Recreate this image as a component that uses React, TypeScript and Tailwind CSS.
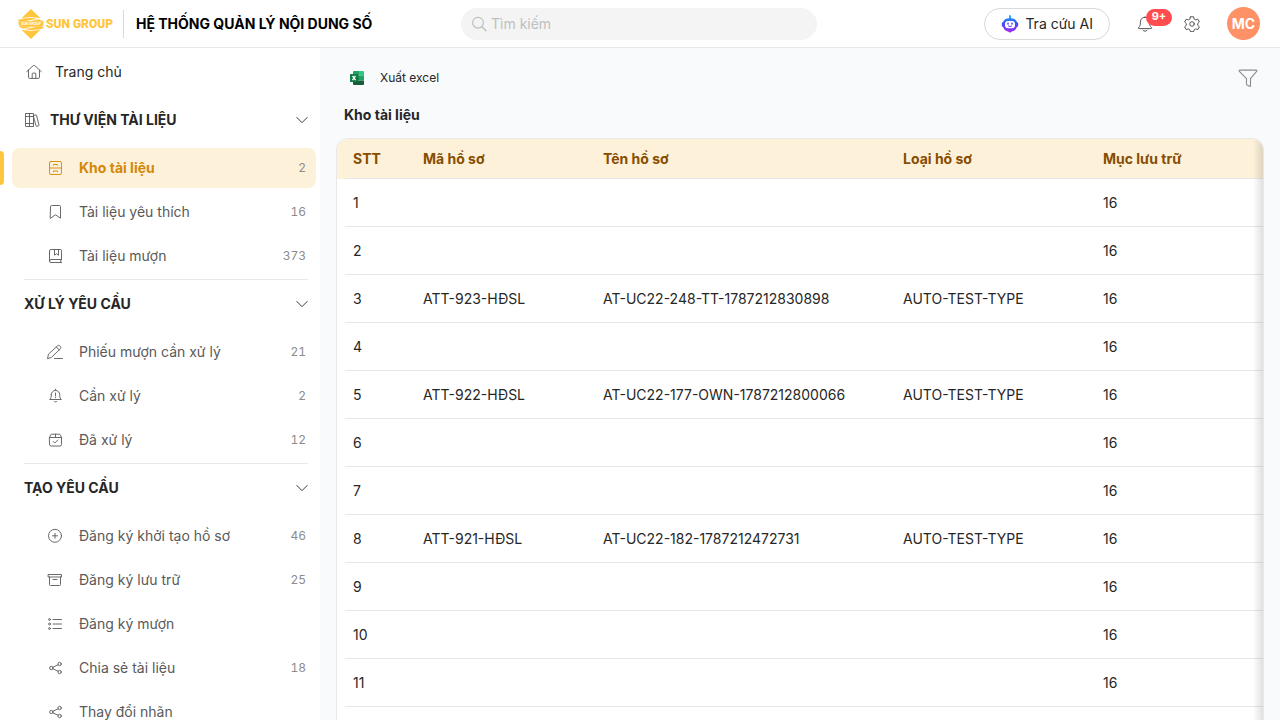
import React from 'react'
import { clsx } from 'clsx'

type IconProps = { className?: string; children?: React.ReactNode }

const Icon = ({ className, children }: IconProps) => (
  <svg
    viewBox="0 0 16 16"
    fill="none"
    stroke="currentColor"
    strokeWidth="0.9"
    strokeLinecap="round"
    strokeLinejoin="round"
    aria-hidden="true"
    className={clsx('shrink-0', className ?? 'size-4')}
  >
    {children}
  </svg>
)

const HomeIcon = () => (
  <Icon>
    <path d="M.7 7.6 7.2 1.7a1.2 1.2 0 0 1 1.6 0l6.5 5.9" />
    <path d="M2.5 6.2v7a1.2 1.2 0 0 0 1.2 1.2h8.6a1.2 1.2 0 0 0 1.2-1.2v-7" />
    <path d="M6.2 14.2V9.9a.8.8 0 0 1 .8-.8h2a.8.8 0 0 1 .8.8v4.3" />
  </Icon>
)

const BooksIcon = () => (
  <Icon>
    <path d="M2 1.5h7.5v13H2a.5.5 0 0 1-.5-.5V2a.5.5 0 0 1 .5-.5ZM5.500 1.500v13M1.500 4.500h8M1.500 11.500h8" />
    <path d="m9.700 3.500 2.200-.6a.5.5 0 0 1 .6.4l2.500 9.900a.5.5 0 0 1-.4.6l-2 .5a.5.5 0 0 1-.6-.4L9.700 5.200" />
  </Icon>
)

const CabinetIcon = () => (
  <Icon>
    <rect x="2.5" y="1.5" width="12" height="13" rx="1.5" />
    <path d="M2.500 8h12M6.500 5.200v-.7h4v.7M6.500 11.700V11h4v.7" />
  </Icon>
)

const BookmarkIcon = () => (
  <Icon>
    <path d="M3.500 2.500a1 1 0 0 1 1-1h8a1 1 0 0 1 1 1v11.700l-5-3.400-5 3.400z" />
  </Icon>
)

const BookIcon = () => (
  <Icon>
    <path d="M14.500 11.500V2.500a1 1 0 0 0-1-1h-9.500a1.500 1.500 0 0 0-1.500 1.500v10a1.500 1.500 0 0 0 1.500 1.500h10.500" />
    <path d="M2.500 13A1.500 1.500 0 0 1 4 11.500h10.500M13.800 11.500v3" />
    <path d="M7.500 1.500v5.700l2-1.500 2 1.500V1.500" />
  </Icon>
)

const PencilIcon = () => (
  <Icon>
    <path d="m.6 14.300.9-4.200 9.100-8.300a1.600 1.600 0 0 1 2.200 0l.6.700a1.600 1.600 0 0 1 0 2.200l-8.600 8.400z" />
    <path d="m9.400 3 2.900 3M7.500 14.500h8" />
  </Icon>
)

const AlertBellIcon = () => (
  <Icon>
    <path d="M8.500 1.200v1M4.300 6.600a4.200 4.200 0 0 1 8.400 0c0 3 .6 4 1.600 4.900H2.700c1-.9 1.600-1.900 1.600-4.900ZM7.200 13.300c.6.900 2 .9 2.600 0M8.500 5v3" />
    <path d="M8.500 9.600h.01" strokeWidth="1.2" />
  </Icon>
)

const BoxCheckIcon = () => (
  <Icon>
    <path d="M2.500 5.500 3.700 2.800a1 1 0 0 1 .9-.6h7.800a1 1 0 0 1 .9.600l1.200 2.700v7a1.500 1.500 0 0 1-1.500 1.500H4a1.500 1.500 0 0 1-1.500-1.500zM2.500 5.500h12M8.500 2.200v3.300" />
    <path d="m6.300 9.500 1.500 1.500 2.900-2.900" />
  </Icon>
)

const PlusCircleIcon = () => (
  <Icon>
    <circle cx="8" cy="7.8" r="6.5" />
    <path d="M8 5.300v5M5.500 7.800h5" />
  </Icon>
)

const ArchiveIcon = () => (
  <Icon>
    <path d="M1.500 2.500h13v2.500h-13zM2.500 5v7.500a1 1 0 0 0 1 1h9a1 1 0 0 0 1-1V5M6 7.500h4" />
  </Icon>
)

const ListIcon = () => (
  <Icon>
    <path d="M6 3.500h8.500M6 8h8.500M6 12.500h8.500" />
    <circle cx="2.5" cy="3.5" r=".9" />
    <circle cx="2.5" cy="8" r=".9" />
    <circle cx="2.5" cy="12.5" r=".9" />
  </Icon>
)

const ShareIcon = () => (
  <Icon>
    <circle cx="4.3" cy="8" r="1.7" />
    <circle cx="12.6" cy="4" r="1.7" />
    <circle cx="12.6" cy="12" r="1.7" />
    <path d="m5.900 7.300 5.200-2.600M5.900 8.800l5.200 2.500" />
  </Icon>
)

const ChevronIcon = () => (
  <Icon className="size-3">
    <path d="m1 4.500 7 7 7-7" strokeWidth="1.2" />
  </Icon>
)

const SearchIcon = () => (
  <Icon>
    <circle cx="7" cy="6.7" r="5.4" strokeWidth="1.2" />
    <path d="m11 10.800 4 4" strokeWidth="1.4" />
  </Icon>
)

const BellIcon = () => (
  <Icon>
    <path d="M8 1.200c-3 0-4.600 2.200-4.600 5 0 3-.5 4-1.900 5.500-.3.400-.1.900.4.900h12.200c.5 0 .7-.5.400-.9-1.400-1.500-1.900-2.500-1.900-5.500 0-2.800-1.600-5-4.600-5ZM6 14.300c1.100 1.200 2.900 1.200 4 0" />
  </Icon>
)

const GearIcon = () => (
  <Icon>
    <circle cx="8" cy="8" r="2.3" />
    <path d="M6.400.8h3.200l.5 2.200 1.500.9 2.200-.7 1.600 2.800-1.700 1.500v1.800l1.700 1.500-1.600 2.800-2.200-.7-1.500.9-.5 1.900H6.400l-.5-1.900-1.500-.9-2.200.7-1.600-2.800 1.700-1.500V7.500L.6 6l1.600-2.800 2.200.7L5.900 3z" />
  </Icon>
)

const FilterIcon = () => (
  <Icon className="size-5">
    <path d="M1.500 1.700h13c.5 0 .8.6.4 1L10 8.500V14c0 .5-.4.800-.8.600l-2-1a.8.8 0 0 1-.4-.7V8.500L1.100 2.700c-.4-.4-.1-1 .4-1Z" />
  </Icon>
)

const RobotIcon = () => (
  <svg viewBox="0 0 18 18" className="size-[18px] shrink-0" aria-hidden="true">
    <defs>
      <linearGradient id="robot" x1="0" y1="0" x2="0" y2="1">
        <stop offset="0" stopColor="#12b5ff" />
        <stop offset=".45" stopColor="#3b50f5" />
        <stop offset="1" stopColor="#a928f0" />
      </linearGradient>
    </defs>
    <path
      fill="url(#robot)"
      d="M8.100 1a.9.900 0 0 1 1.800 0v2.200c3.200.1 5.300 1.400 6 3.700.8.200 1.300.9 1.300 1.800v1.600c0 .9-.5 1.600-1.300 1.800-.7 2.500-2.600 4.100-5 4.400L9 17.800l-1.900-1.300c-2.400-.3-4.300-1.900-5-4.400C1.300 11.900.8 11.200.8 10.300V8.700c0-.9.500-1.600 1.300-1.800.7-2.300 2.800-3.600 6-3.700z"
    />
    <rect x="4" y="6" width="10" height="7.2" rx="3" fill="#fff" />
    <path d="M7 8.200v.8M11 8.200v.8" stroke="#4a3df5" strokeWidth="1.500" strokeLinecap="round" />
    <path d="M7.300 10.900c1 .9 2.400.9 3.400 0" fill="none" stroke="#6e3bf2" strokeWidth="1" strokeLinecap="round" />
  </svg>
)

const ExcelIcon = () => (
  <svg viewBox="0 0 14 14" className="size-3.5" aria-hidden="true">
    <path d="M4 0H9v4.700H3V1a1 1 0 0 1 1-1" fill="#21a366" />
    <path d="M9 0h4a1 1 0 0 1 1 1v3.700H9z" fill="#33c481" />
    <path d="M3 4.700H9v4.700H3z" fill="#107c41" />
    <path d="M9 4.700h5v4.700H9z" fill="#21a366" />
    <path d="M3 9.400H14V13a1 1 0 0 1-1 1H4a1 1 0 0 1-1-1z" fill="#185c37" />
    <rect y="3" width="8" height="8" rx=".8" fill="#107c41" />
    <path d="m2.500 4.900 3 4.200M5.500 4.900l-3 4.200" stroke="#fff" strokeWidth="1.300" />
  </svg>
)

const Logo = () => (
  <a href="#" className="flex items-center gap-0.5 text-[#ffc53d]">
    <svg viewBox="0 0 26 30" className="h-[30px] w-[26px]" aria-hidden="true">
      <path d="M13 0 22.500 9.200Q13 7.500 3.500 9.200zM13 30l9.500-9.200q-9.500 1.700-19 0z" fill="currentColor" />
      <path d="M4.500 9.700Q13 8.500 19 9.700L7 12.300H.5v-1.500zM21.500 20.300Q13 21.500 7 20.300l12-2.600h6.500v1.500z" fill="currentColor" />
      <path d="M.5 12.300h25v3l-1.500 2.400H2L.5 15z" fill="currentColor" />
      <path d="M20.500 10.200 25.500 12.300H12zM5.500 19.800.5 17.700H14z" fill="currentColor" />
      <text x="13" y="16.300" textAnchor="middle" fontSize="3.6" fontWeight="700" fill="#fff" fontFamily="Roboto, sans-serif">
        SUN GROUP
      </text>
    </svg>
    <span className="font-[Roboto,sans-serif] text-xs font-black whitespace-nowrap">SUN GROUP</span>
  </a>
)

const sections = [
  {
    title: 'THƯ VIỆN TÀI LIỆU',
    icon: BooksIcon,
    items: [
      { label: 'Kho tài liệu', icon: CabinetIcon, count: 2, active: true },
      { label: 'Tài liệu yêu thích', icon: BookmarkIcon, count: 16 },
      { label: 'Tài liệu mượn', icon: BookIcon, count: 373 },
    ],
  },
  {
    title: 'XỬ LÝ YÊU CẦU',
    items: [
      { label: 'Phiếu mượn cần xử lý', icon: PencilIcon, count: 21 },
      { label: 'Cần xử lý', icon: AlertBellIcon, count: 2 },
      { label: 'Đã xử lý', icon: BoxCheckIcon, count: 12 },
    ],
  },
  {
    title: 'TẠO YÊU CẦU',
    items: [
      { label: 'Đăng ký khởi tạo hồ sơ', icon: PlusCircleIcon, count: 46 },
      { label: 'Đăng ký lưu trữ', icon: ArchiveIcon, count: 25 },
      { label: 'Đăng ký mượn', icon: ListIcon },
      { label: 'Chia sẻ tài liệu', icon: ShareIcon, count: 18 },
      { label: 'Thay đổi nhãn', icon: ShareIcon },
    ],
  },
]

type RecordRow = { code?: string; name?: string; type?: string; storage: string }

const rows: RecordRow[] = [
  { storage: '16' },
  { storage: '16' },
  { code: 'ATT-923-HĐSL', name: 'AT-UC22-248-TT-1787212830898', type: 'AUTO-TEST-TYPE', storage: '16' },
  { storage: '16' },
  { code: 'ATT-922-HĐSL', name: 'AT-UC22-177-OWN-1787212800066', type: 'AUTO-TEST-TYPE', storage: '16' },
  { storage: '16' },
  { storage: '16' },
  { code: 'ATT-921-HĐSL', name: 'AT-UC22-182-1787212472731', type: 'AUTO-TEST-TYPE', storage: '16' },
  { storage: '16' },
  { storage: '16' },
  { storage: '16' },
  { storage: '16' },
]

const columns = [
  { label: 'STT', width: 'w-[70px]' },
  { label: 'Mã hồ sơ', width: 'w-[180px]' },
  { label: 'Tên hồ sơ', width: 'w-[300px]' },
  { label: 'Loại hồ sơ', width: 'w-[200px]' },
  { label: 'Mục lưu trữ', width: '' },
]

const Header = () => (
  <header className="flex h-12 shrink-0 items-center border-b border-[#e8e8e8] bg-white px-[18px]">
    <div className="flex flex-1 items-center">
      <Logo />
      <h1 className="ml-2.5 flex h-7 items-center border-l border-[#d9d9d9] pl-3 font-bold whitespace-nowrap text-black">
        HỆ THỐNG QUẢN LÝ NỘI DUNG SỐ
      </h1>
    </div>

    <label className="flex h-8 w-[356px] items-center gap-1 rounded-full bg-[#f4f4f4] px-2.5 text-[#bfbfbf]">
      <SearchIcon />
      <input
        type="search"
        aria-label="Tìm kiếm"
        placeholder="Tìm kiếm"
        className="min-w-0 flex-1 bg-transparent text-[#262626] outline-none placeholder:text-[#bfbfbf]"
      />
    </label>

    <div className="flex flex-1 items-center justify-end pr-0.5">
      <button type="button" className="flex h-8 items-center gap-1.5 rounded-full border border-[#d9d9d9] px-4 whitespace-nowrap">
        <RobotIcon />
        Tra cứu AI
      </button>
      <button type="button" aria-label="Thông báo" className="relative ml-[27px] text-[#434343]">
        <BellIcon />
        <span className="absolute -top-[7px] left-[9px] flex h-[17px] w-[26px] items-center justify-center rounded-full bg-[#ff4d4f] text-[11px] font-bold text-white">
          9+
        </span>
      </button>
      <button type="button" aria-label="Cài đặt" className="ml-[31px] text-[#434343]">
        <GearIcon />
      </button>
      <button type="button" className="ml-[27px] size-[33px] rounded-full bg-[#ff9166] font-bold text-white">
        MC
      </button>
    </div>
  </header>
)

const Sidebar = () => (
  <nav className="w-80 shrink-0 overflow-hidden bg-white">
    <a href="#" className="flex h-12 items-center gap-[13px] pl-[26px]">
      <span className="text-[#595959]"><HomeIcon /></span>
      Trang chủ
    </a>

    {sections.map((section, index) => (
      <section key={section.title}>
        <button type="button" className="flex h-12 w-full items-center justify-between pr-3 pl-6 font-bold">
          <span className="flex items-center gap-2.5">
            {section.icon && <span className="text-[#595959]"><section.icon /></span>}
            {section.title}
          </span>
          <ChevronIcon />
        </button>
        <ul className="flex flex-col gap-1 pt-1 pb-[3px]">
          {section.items.map((item) => (
            <li
              key={item.label}
              className={clsx(
                'relative pr-1 pl-3',
                item.active &&
                  'before:absolute before:top-[3px] before:left-0 before:h-[34px] before:w-1 before:rounded-r-sm before:bg-[#ffc53d]',
              )}
            >
              <a
                href="#"
                className={clsx(
                  'flex h-10 items-center gap-4 rounded-lg pr-2.5 pl-[35px]',
                  item.active ? 'bg-[#fdf1da] font-bold text-[#d48806]' : 'text-[#595959]',
                )}
              >
                <item.icon />
                <span className="flex-1">{item.label}</span>
                <span className="text-xs font-normal text-[#8c8c8c] tabular-nums">{item.count}</span>
              </a>
            </li>
          ))}
        </ul>
        {index < sections.length - 1 && <hr className="mr-3 ml-6 border-[#e8e8e8]" />}
      </section>
    ))}
  </nav>
)

// Row line starts 8px in from the card's edge
const firstCell =
  "relative after:absolute after:right-0 after:bottom-0 after:left-2 after:h-px after:bg-[#e8e8e8] after:content-['']"
const otherCell = 'shadow-[inset_0_-1px_0_#e8e8e8]'

const RecordTable = () => (
  <div className="relative min-h-0 flex-1 overflow-hidden rounded-t-xl border border-b-0 border-[#e8e8e8] bg-white">
    <table className="w-full table-fixed text-left">
      <thead className="bg-[#fdf1da] text-[#874d00]">
        <tr className="h-10">
          {columns.map((column, i) => (
            <th
              key={column.label}
              scope="col"
              className={clsx('px-4 py-0 font-bold', column.width, i === 0 ? firstCell : otherCell)}
            >
              {column.label}
            </th>
          ))}
        </tr>
      </thead>
      <tbody>
        {rows.map((row, i) => (
          <tr key={i} className="h-12">
            <td className={clsx('px-4 py-0', firstCell)}>{i + 1}</td>
            <td className={clsx('px-4 py-0', otherCell)}>{row.code}</td>
            <td className={clsx('px-4 py-0', otherCell)}>{row.name}</td>
            <td className={clsx('px-4 py-0', otherCell)}>{row.type}</td>
            <td className={clsx('px-4 py-0', otherCell)}>{row.storage}</td>
          </tr>
        ))}
      </tbody>
    </table>
    <div className="pointer-events-none absolute inset-y-0 right-0 w-2.5 bg-linear-to-l from-black/12 to-transparent" />
  </div>
)

export default function App() {
  return (
    <div className="flex h-screen flex-col overflow-hidden bg-[#f8fafc] font-[Inter,sans-serif] text-sm text-[#262626]">
      <Header />
      <div className="flex min-h-0 flex-1">
        <Sidebar />
        <main className="flex min-w-0 flex-1 flex-col px-4">
          <div className="flex h-14 shrink-0 items-end justify-between pr-1.5 pb-3 pl-3.5">
            <button type="button" className="flex h-7 items-center gap-4 text-xs">
              <ExcelIcon />
              Xuất excel
            </button>
            <button type="button" aria-label="Bộ lọc" className="flex h-7 items-center text-[#8c8c8c]">
              <FilterIcon />
            </button>
          </div>
          <h2 className="mb-3 ml-2 shrink-0 leading-[22px] font-bold">Kho tài liệu</h2>
          <RecordTable />
        </main>
      </div>
    </div>
  )
}
